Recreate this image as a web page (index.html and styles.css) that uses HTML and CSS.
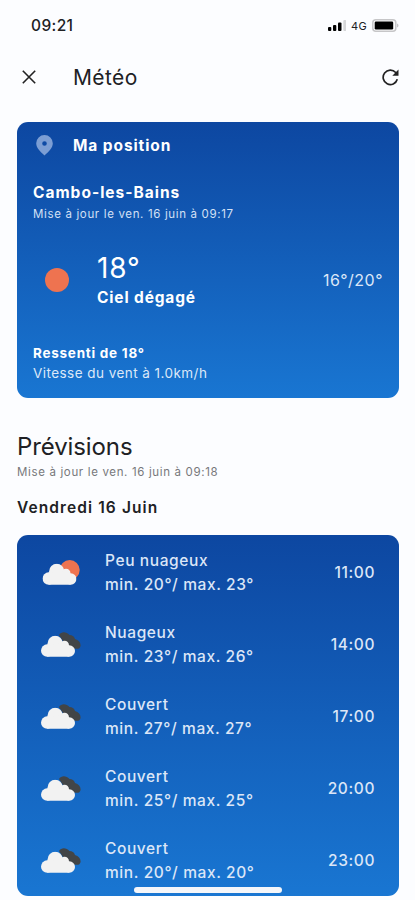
FILE: index.html
```html
<!DOCTYPE html>
<html lang="fr">

<head>
    <meta charset="UTF-8">
    <meta name="viewport" content="width=device-width, initial-scale=1">
    <title>Météo</title>
    <link rel="stylesheet" href="styles.css">
</head>

<body>
    <!-- formes réutilisées par les lignes de prévision -->
    <svg class="symbols" width="0" height="0">
        <symbol id="cloud" viewBox="0 0 34 21">
            <circle cx="6.2" cy="14.8" r="6.2" />
            <circle cx="14.2" cy="7.6" r="7.6" />
            <circle cx="23.5" cy="9.5" r="4.5" />
            <circle cx="28.3" cy="15.3" r="5.7" />
            <path d="M6.2 8.6L24 8l4.3 13H6.2z" />
        </symbol>
        <symbol id="few-clouds" viewBox="0 0 40 26">
            <circle cx="28.7" cy="10" r="10" fill="#ee7350" />
            <use href="#cloud" x="1.5" y="3.5" width="34" height="21.5" fill="#f2f2f2" />
        </symbol>
        <symbol id="clouds" viewBox="0 0 40 26">
            <path d="M18 3C20 -.3 25-.8 28.5 3c2.8 0 4.5 1 5.500 4 3.500 1 5.600 3.300 5.600 6.400 0 1.500-1 3-2.600 3.400H27z" fill="#424547" />
            <use href="#cloud" x="0" y="3.500" width="34" height="21.5" fill="#f2f2f2" />
        </symbol>
    </svg>

    <div class="status-bar">
        <span class="clock">09:21</span>
        <div class="status-icons">
            <svg width="18" height="12" viewBox="0 0 18 12">
                <rect x="0" y="7" width="3.3" height="4" rx="1" />
                <rect x="5" y="5" width="3.3" height="6" rx="1" />
                <rect x="10" y="2.5" width="3.5" height="8.5" rx="1" />
                <rect x="15.3" y="0" width="3" height="11" rx="1" fill="#d5d6d8" />
            </svg>
            <span class="network">4G</span>
            <svg width="27" height="13" viewBox="0 0 27 13">
                <rect x=".8" y=".8" width="23" height="11.4" rx="3" fill="#fff" stroke="#c6c6c8" stroke-width="1.5" />
                <rect x="2.7" y="2.5" width="18.5" height="8" rx="1.2" />
                <path d="M25 4.5v4c2-.8 2-3.200 0-4z" fill="#c6c6c8" />
            </svg>
        </div>
    </div>

    <header class="app-bar">
        <svg class="close" width="14" height="14" viewBox="0 0 14 14">
            <path d="M.8.8l12.400 12.400M13.200.8L.8 13.200" />
        </svg>
        <h1>Météo</h1>
        <svg class="refresh" width="17" height="17" viewBox="0 0 17 17">
            <path d="M15.300 10.300A7.200 7.200 0 1 1 13.700 3.500L15.600 5.300" fill="none" stroke="#222" stroke-width="1.7" />
            <path d="M16.500.5v6.200h-6.200z" fill="#222" />
        </svg>
    </header>

    <section class="card current">
        <div class="position">
            <svg width="17" height="21" viewBox="0 0 17 21">
                <path d="M8.500 0A8.300 8.300 0 0 0 .2 8.300C.2 13 4.500 17 8.500 20.500 12.500 17 16.800 13 16.800 8.300A8.300 8.300 0 0 0 8.500 0zm0 6.200a2.300 2.300 0 1 1 0 4.600 2.300 2.300 0 0 1 0-4.600z" fill="#7c9ed4" fill-rule="evenodd" />
            </svg>
            <span>Ma position</span>
        </div>
        <div class="city">Cambo-les-Bains</div>
        <div class="updated">Mise à jour le ven. 16 juin à 09:17</div>
        <div class="now">
            <div class="sun"></div>
            <div class="now-text">
                <div class="temp">18°</div>
                <div class="sky">Ciel dégagé</div>
            </div>
            <div class="range">16°/20°</div>
        </div>
        <div class="feels">Ressenti de 18°</div>
        <div class="wind">Vitesse du vent à 1.0km/h</div>
    </section>

    <section class="forecast">
        <h2>Prévisions</h2>
        <div class="updated">Mise à jour le ven. 16 juin à 09:18</div>
        <h3>Vendredi 16 Juin</h3>
        <div class="card hours">
            <div class="hour">
                <svg width="40" height="26"><use href="#few-clouds" /></svg>
                <div class="hour-text">
                    <div>Peu nuageux</div>
                    <div>min. 20°/ max. 23°</div>
                </div>
                <span class="time">11:00</span>
            </div>
            <div class="hour">
                <svg width="40" height="26"><use href="#clouds" /></svg>
                <div class="hour-text">
                    <div>Nuageux</div>
                    <div>min. 23°/ max. 26°</div>
                </div>
                <span class="time">14:00</span>
            </div>
            <div class="hour">
                <svg width="40" height="26"><use href="#clouds" /></svg>
                <div class="hour-text">
                    <div>Couvert</div>
                    <div>min. 27°/ max. 27°</div>
                </div>
                <span class="time">17:00</span>
            </div>
            <div class="hour">
                <svg width="40" height="26"><use href="#clouds" /></svg>
                <div class="hour-text">
                    <div>Couvert</div>
                    <div>min. 25°/ max. 25°</div>
                </div>
                <span class="time">20:00</span>
            </div>
            <div class="hour">
                <svg width="40" height="26"><use href="#clouds" /></svg>
                <div class="hour-text">
                    <div>Couvert</div>
                    <div>min. 20°/ max. 20°</div>
                </div>
                <span class="time">23:00</span>
            </div>
        </div>
    </section>

    <div class="home-indicator"></div>
</body>

</html>
```
FILE: styles.css
```css
:root {
    --blue-dark: #0d47a1;
    --blue-light: #1976d2;
    --background: #fcfdff;
    --text: #202124;
}

* {
    box-sizing: border-box;
}

body {
    position: relative;
    height: 900px;
    margin: 0;
    padding: 0 16px 0 17px;
    overflow: hidden;
    background: var(--background);
    color: var(--text);
    font-family: Inter, Roboto, sans-serif;
}

h1, h2, h3 {
    margin: 0;
}

svg {
    display: block;
    flex: none;
}

.symbols {
    position: absolute;
}

/* barre d'état */
.status-bar {
    display: flex;
    justify-content: space-between;
    align-items: center;
    height: 51px;
    padding: 0 0 0 14px;
}

.clock {
    font-size: 15.5px;
    font-weight: 500;
    letter-spacing: 0.4px;
}

.status-icons {
    display: flex;
    align-items: center;
}

.network {
    width: 17px;
    margin: 0 4px 0 5px;
    font-size: 11px;
    font-weight: 400;
    letter-spacing: 0.4px;
}

.app-bar {
    display: flex;
    align-items: center;
    height: 52px;
    padding: 0 0 0 5px;
}

.close {
    stroke: #222;
    stroke-width: 1.6;
}

.app-bar h1 {
    flex: 1;
    margin-left: 37px;
    font-size: 21px;
    font-weight: 400;
    letter-spacing: 0.4px;
}

.card {
    border-radius: 11px;
    background: linear-gradient(var(--blue-dark), var(--blue-light));
    color: #fff;
}

/* météo actuelle */
.current {
    height: 276px;
    margin-top: 19px;
    padding: 11px 16px 0;
}

.position {
    display: flex;
    align-items: center;
    height: 24px;
    padding-left: 3px;
    font-size: 15.5px;
    font-weight: 700;
    letter-spacing: 0.9px;
}

.position span {
    margin-left: 20px;
}

.city {
    margin-top: 24px;
    font-size: 15.5px;
    font-weight: 700;
    line-height: 24px;
    letter-spacing: 1px;
}

.updated {
    font-size: 11.5px;
    line-height: 18px;
    letter-spacing: 0.65px;
}

.current .updated {
    color: #d3e0f5;
}

.now {
    display: flex;
    align-items: center;
    height: 60px;
    margin-top: 27px;
    padding-left: 12px;
}

.sun {
    width: 24px;
    height: 24px;
    border-radius: 50%;
    background: #ee7350;
}

.now-text {
    flex: 1;
    margin-left: 28px;
}

.temp {
    margin-top: 2px;
    font-size: 28px;
    line-height: 34px;
    letter-spacing: 0.9px;
}

.sky {
    font-size: 15.5px;
    font-weight: 700;
    line-height: 26px;
    letter-spacing: 0.85px;
}

.range {
    color: #dce7f8;
    font-size: 16px;
    letter-spacing: 0.5px;
}

.feels {
    margin-top: 33px;
    font-size: 13.5px;
    font-weight: 700;
    line-height: 20px;
    letter-spacing: 0.75px;
}

.wind {
    color: #dce8f8;
    font-size: 13.5px;
    line-height: 20px;
    letter-spacing: 0.45px;
}

/* prévisions */
.forecast h2 {
    margin-top: 33px;
    font-size: 24px;
    font-weight: 400;
    line-height: 32px;
    letter-spacing: -0.1px;
}

.forecast .updated {
    color: #77787b;
}

.forecast h3 {
    margin-top: 15px;
    font-size: 15.5px;
    font-weight: 600;
    line-height: 24px;
    letter-spacing: 1.1px;
}

.hours {
    height: 361px;
    margin-top: 15px;
    padding-left: 24px;
    padding-right: 24px;
}

.hour {
    display: flex;
    align-items: center;
    height: 72.2px;
    padding-top: 3px;
    color: #dce6f7;
    font-size: 15.5px;
    font-weight: 500;
    line-height: 24px;
    letter-spacing: 0.6px;
}

.hour-text {
    flex: 1;
    margin-left: 24px;
}

.home-indicator {
    position: absolute;
    left: 134px;
    top: 887px;
    width: 148px;
    height: 6px;
    border-radius: 3px;
    background: #f4f6fa;
}
```
